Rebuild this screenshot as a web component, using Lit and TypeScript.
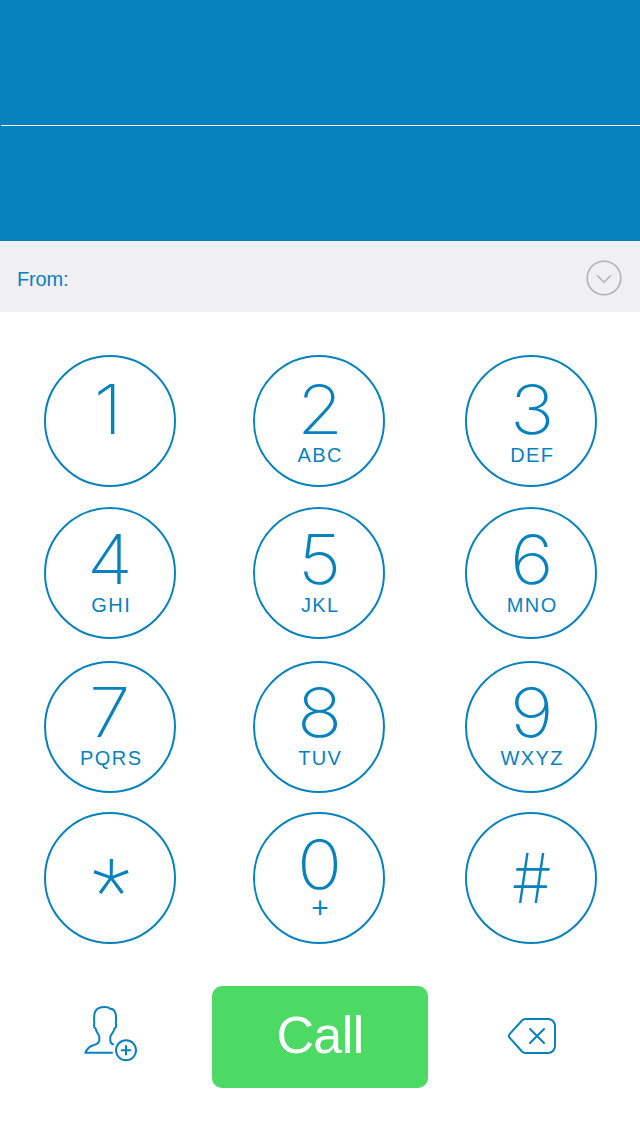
import { LitElement, html, css } from "lit";
import { customElement, property } from "lit/decorators.js";
import { classMap } from "lit/directives/class-map.js";

@customElement("dial-key")
export class DialKey extends LitElement {
  @property() digit = "";
  @property() letters = "";

  static styles = css`
    :host { display: block; width: 132px; height: 132px; }
    .ring {
      box-sizing: border-box;
      width: 132px;
      height: 132px;
      border: 2px solid #0782bf;
      border-radius: 50%;
      background: #fff;
      color: #0782bf;
      display: flex;
      flex-direction: column;
      align-items: center;
      padding: var(--key-top, 27px) 0 0 2px;
      margin: 0;
    }
    .digit {
      font: 150 68px/50px Inter, "Liberation Sans", sans-serif;
      height: 50px;
      transform: scaleX(1.1);
    }
    .letters {
      font: 400 20px/20px "Liberation Sans", Arial, sans-serif;
      letter-spacing: 1.4px;
      margin: 10.500px 0 0 0.500px;
      height: 20px;
    }
    .symbol { padding-top: 39px; }
    .one .digit { margin-right: 7px; }
    .lean .digit { margin-right: 2px; }
    .hash .digit { transform: scaleX(0.9); }
    .star .digit {
      font-family: Roboto, sans-serif;
      font-weight: 200;
      font-size: 89px;
      padding-top: 14px;
      transform: none;
    }
    .plus .letters { font-size: 30px; letter-spacing: 0; margin: 9px 0 0; }
  `;

  render() {
    const d = this.digit;
    return html`<button
      class=${classMap({
        ring: true,
        symbol: d === "*" || d === "#",
        star: d === "*",
        hash: d === "#",
        one: d === "1",
        lean: d === "4" || d === "7",
        plus: this.letters === "+",
      })}
    >
      <span class="digit">${d}</span>
      ${this.letters ? html`<span class="letters">${this.letters}</span>` : ""}
    </button>`;
  }
}

const ROWS: [string, string][][] = [
  [["1", ""], ["2", "ABC"], ["3", "DEF"]],
  [["4", "GHI"], ["5", "JKL"], ["6", "MNO"]],
  [["7", "PQRS"], ["8", "TUV"], ["9", "WXYZ"]],
  [["*", ""], ["0", "+"], ["#", ""]],
];

@customElement("app-root")
export class AppRoot extends LitElement {
  static styles = css`
    :host {
      display: flex;
      flex-direction: column;
      width: 640px;
      height: 1136px;
      overflow: hidden;
      background: #fff;
      color: #0782bf;
      font-family: "Liberation Sans", Arial, sans-serif;
    }
    .display { height: 241px; background: #0782bf; }
    .number {
      box-sizing: border-box;
      height: 126px;
      margin-left: 1px;
      border-bottom: 1px solid #fff;
    }
    .from {
      box-sizing: border-box;
      height: 71px;
      background: #efeff4;
      display: flex;
      align-items: center;
      justify-content: space-between;
      padding: 3px 18px 0 17px;
      font-size: 20px;
    }
    .from svg { margin-top: -1px; }
    .label { margin-top: 2px; letter-spacing: -0.15px; }
    svg { display: block; fill: none; stroke: #0782bf; stroke-width: 2; }
    .chevron { stroke: #b3b3b5; }
    .pad {
      display: grid;
      grid-template-rows: 152px 154px 151px 132px;
      padding: 43px 0 0 44px;
    }
    .row { display: grid; grid-template-columns: 209px 212px 132px; }
    .row-0 { --key-top: 27px; }
    .row-1 { --key-top: 25px; }
    .row-2 { --key-top: 24px; }
    .row-3 { --key-top: 25px; }
    .actions {
      display: grid;
      grid-template-columns: 212px 216px 212px;
      height: 102px;
      margin-top: 42px;
      align-items: center;
    }
    .call {
      height: 102px;
      border-radius: 10px;
      background: #4cd964;
      color: #fff;
      font-size: 52px;
      letter-spacing: -0.6px;
      line-height: 99px;
      text-align: center;
    }
    .add { margin: -8px 0 0 83px; }
    .erase { margin: -2px 0 0 79px; }
    .stroke { stroke-linecap: round; stroke-linejoin: round; }
  `;

  render() {
    return html`
      <div class="display"><div class="number"></div></div>
      <div class="from">
        <span class="label">From:</span>
        <svg class="chevron" width="36" height="36" viewBox="0 0 36 36">
          <circle cx="18" cy="18" r="16.8" stroke-width="1.6" />
          <path d="M11 15.2l7 7 7-7" stroke-width="1.6" />
        </svg>
      </div>
      <div class="pad">
        ${ROWS.map(
          (row, i) => html`<div class="row row-${i}">
            ${row.map(([d, l]) => html`<dial-key .digit=${d} .letters=${l}></dial-key>`)}
          </div>`
        )}
      </div>
      <div class="actions">
        <svg class="add stroke" width="56" height="58" viewBox="0 0 56 58">
          <path d="M29 48.800H2.300C3.500 46 6 42.800 9.500 41.500C13 40.500 16.300 39.500 16.300 36.500V33C16.300 30.500 13.300 28.500 12.800 25C11.300 23.800 10.700 21.800 11.300 20C10.600 10 10.500 3 22 3C24.500 3 26 3.500 27.200 4.800C32 5 33.800 9 32.800 19.500C33.600 21.500 32.800 23.800 31.300 25C31 28.500 27.300 30.500 27.300 33V36.500C27.300 38.500 28.500 39.700 30 40.300" />
          <circle cx="43" cy="46.300" r="10" />
          <path d="M43 42v8.600M38.700 46.300h8.600" />
        </svg>
        <div class="call">Call</div>
        <svg class="erase stroke" width="52" height="40" viewBox="0 0 52 40">
          <path d="M18.500 3H41a7 7 0 0 1 7 7v20a7 7 0 0 1-7 7H18.500c-1.500 0-2.500-.5-3.500-1.500L3 22.200c-1.500-1.500-1.500-3 0-4.500L15 4.500C16 3.500 17 3 18.500 3z" />
          <path d="M23 13l14 14M37 13L23 27" />
        </svg>
      </div>
    `;
  }
}
